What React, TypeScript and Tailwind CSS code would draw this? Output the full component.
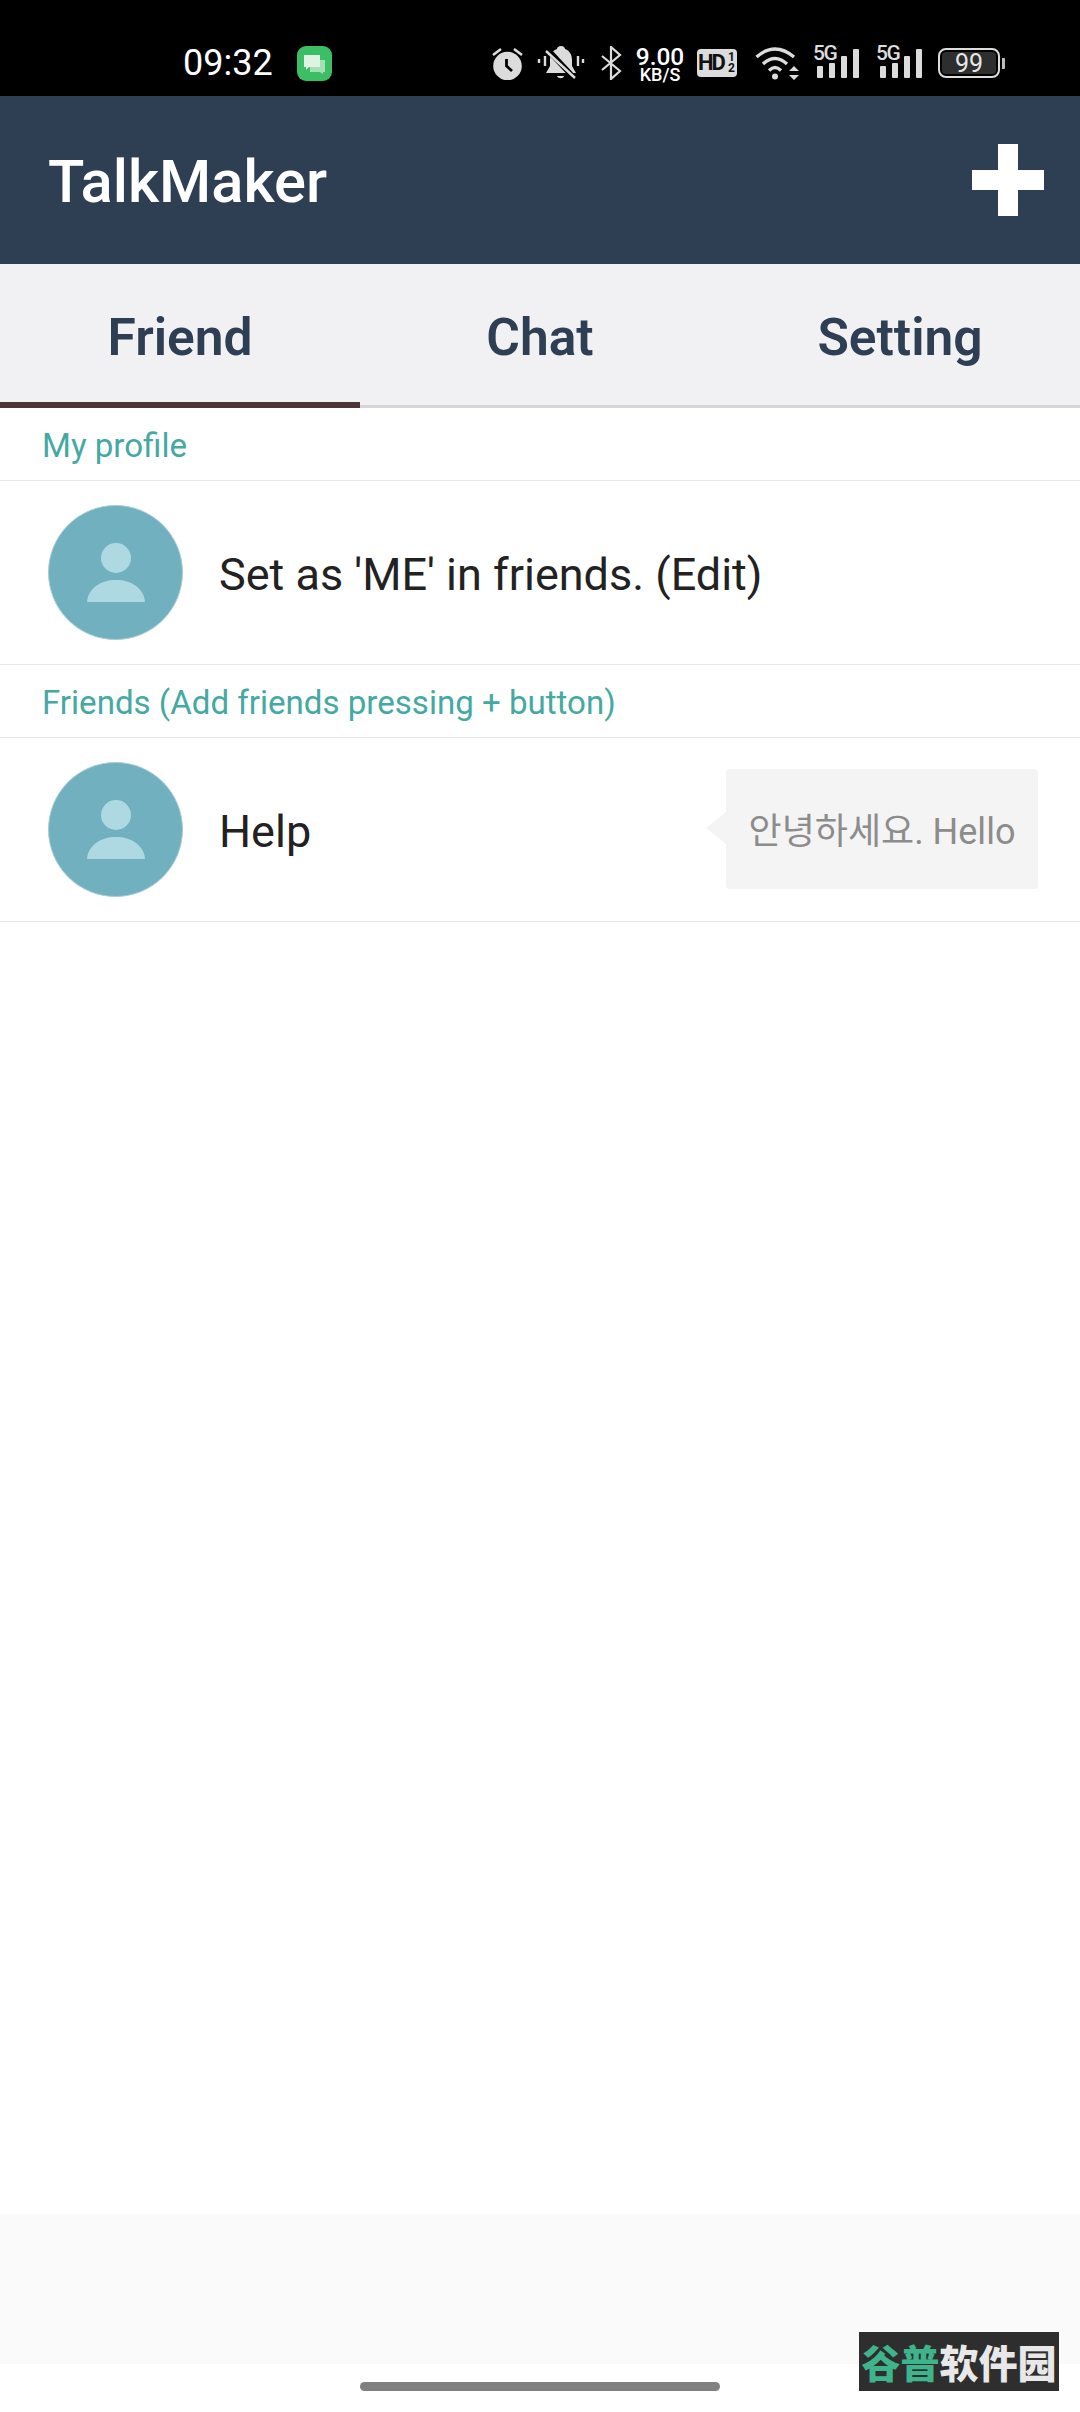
const SANS = "font-['Roboto','Noto_Sans_CJK_KR',sans-serif]";

const Avatar = () => (
  <div className="w-[135px] h-[135px] rounded-full bg-[#71b0bf] border border-[#a9cdd5] shrink-0 flex items-center justify-center overflow-hidden">
    <svg width="58" height="59" viewBox="0 0 58 59">
      <circle cx="29" cy="15" r="15" fill="#aed9e2" />
      <path d="M0 59 C1 45 14 37 29 37 C44 37 57 45 58 59 Z" fill="#aed9e2" />
    </svg>
  </div>
);

const SectionLabel = ({ text }: { text: string }) => (
  <div className="h-[73px] pl-[42px] pt-[3px] flex items-center border-b border-[#e6e6e6] text-[33.1px] text-[#45a9a3] shrink-0">
    {text}
  </div>
);

const Signal = () => (
  <div className="w-[46px] h-[32px] mb-[2px] flex items-end gap-[6px]">
    <div className="w-[22px] flex flex-col">
      <span className="-mt-[1px] h-[17px] text-[21px] leading-[17px] font-medium text-[#dcdcdc] font-['Roboto',sans-serif] tracking-[-1.5px] whitespace-nowrap">5G</span>
      <div className="h-[16px] pl-[4px] flex items-end gap-[6px]">
        <div className="w-[6px] h-[12px] rounded-[1px] bg-[#dcdcdc]" />
        <div className="w-[6px] h-[15px] rounded-[1px] bg-[#dcdcdc]" />
      </div>
    </div>
    <div className="w-[6px] h-[22px] rounded-[1px] bg-[#dcdcdc]" />
    <div className="w-[6px] h-[29px] rounded-[1px] bg-[#dcdcdc]" />
  </div>
);

const StatusIcons = () => (
  <div className="flex items-center">
    {/* alarm */}
    <svg width="31" height="33" viewBox="0 0 31 33" className="mr-[14px]">
      <circle cx="15.5" cy="19" r="14.3" fill="#dcdcdc" />
      <path d="M14.5 12 V19 L20 24" stroke="#000" strokeWidth="2.8" fill="none" />
      <path d="M1 8 L9 2 M30 8 L22 2" stroke="#dcdcdc" strokeWidth="2.6" />
    </svg>
    {/* muted bell */}
    <svg width="48" height="34" viewBox="0 0 48 34" className="mr-[16px]">
      <path d="M24 0 C21 0 20 2 20 3 C15 5 13 9 13 14 L13 20 L9 27 L39 27 L35 20 L35 14 C35 9 33 5 28 3 C28 2 27 0 24 0 Z" fill="#dcdcdc" />
      <path d="M10 3 L38 33" stroke="#000" strokeWidth="5.5" />
      <path d="M9 5 L38 32" stroke="#dcdcdc" strokeWidth="2.4" />
      <path d="M2 13 V17 M8 10 V20 M41 10 V20 M46 13 V17" stroke="#dcdcdc" strokeWidth="2.4" />
      <path d="M20 30 H27 C26.5 33 21 33 20 30 Z" fill="#dcdcdc" />
    </svg>
    {/* bluetooth */}
    <svg width="21" height="34" viewBox="0 0 21 34" className="mr-[14px]">
      <path d="M1 10 L19 25 L10 33 V1 L19 9 L1 24" stroke="#dcdcdc" strokeWidth="2.2" fill="none" />
    </svg>
    <div className="w-[48px] pt-[1px] mr-[13px] flex flex-col items-center text-white font-['Roboto',sans-serif] font-medium">
      <span className="text-[24.5px] leading-[21px]">9.00</span>
      <span className="text-[18px] leading-[15px]">KB/S</span>
    </div>
    {/* HD badge */}
    <div className="w-[40px] h-[28px] mr-[18px] rounded-[4px] bg-[#dcdcdc] flex items-center justify-center text-[#111111] font-bold font-['Roboto',sans-serif] text-[22px] leading-none tracking-[-2px]">
      HD
      <span className="ml-[3px] w-[9px] text-[12px] leading-[11px] text-center tracking-normal">
        1<br />2
      </span>
    </div>
    {/* wifi */}
    <svg width="44" height="33" viewBox="0 0 44 33" className="mr-[14px]">
      <path d="M1.5 10 Q20 -6 39 10" stroke="#dcdcdc" strokeWidth="3.4" fill="none" />
      <path d="M8 17 Q20 6 32 17" stroke="#dcdcdc" strokeWidth="3.4" fill="none" />
      <path d="M14 23.5 Q20 17.5 26 23.5" stroke="#dcdcdc" strokeWidth="3.2" fill="none" />
      <circle cx="20" cy="29.5" r="3" fill="#dcdcdc" />
      <path d="M34 24 L39 19 L44 24 Z M34 28 L44 28 L39 33 Z" fill="#dcdcdc" />
    </svg>
    <Signal />
    <div className="w-[17px]" />
    <Signal />
    <div className="w-[16px]" />
    {/* battery */}
    <div className="w-[62px] h-[30px] rounded-[8px] border-2 border-[#dcdcdc] p-[2px]">
      <div className="w-full h-full rounded-[4px] bg-[#2e2e2e] flex items-center justify-center text-[#e6e6e6] text-[25px] leading-none font-['Roboto',sans-serif]">
        99
      </div>
    </div>
    <div className="w-[3px] h-[11px] ml-[2px] rounded-r-[1px] bg-[#bdbdbd]" />
  </div>
);

const TAB = "w-[360px] pt-[6px] flex items-center justify-center text-[51.5px] font-semibold text-[#2e3f53]";

export default function App() {
  return (
    <div className={`relative w-[1080px] h-[2412px] bg-white flex flex-col overflow-hidden ${SANS}`}>
      <div className="h-[96px] bg-black flex items-center pl-[183px] pr-[75px] pt-[33px] pb-[3px] shrink-0">
        <span className="text-white text-[36px] leading-none w-[114px]">09:32</span>
        <div className="w-[35px] h-[35px] rounded-[9px] bg-[#3cbf64]">
          <svg width="35" height="35" viewBox="0 0 35 35">
            <path d="M13 14 H28 V26 H26 V28 L23 26 H13 Z" fill="#a5e0b5" />
            <path d="M7 9 H23 V21 H12 L9 24 V21 H7 Z" fill="#def3e3" />
          </svg>
        </div>
        <div className="flex-1" />
        <StatusIcons />
      </div>

      <div className="h-[168px] bg-[#2e3f53] flex items-center justify-between pl-[48px] pr-[36px] shrink-0">
        <span className="pt-[6px] text-white text-[59.7px] font-medium">TalkMaker</span>
        <div className="relative w-[72px] h-[72px]">
          <div className="absolute left-[26px] top-0 w-[20px] h-[72px] bg-white" />
          <div className="absolute left-0 top-[26px] w-[72px] h-[20px] bg-white" />
        </div>
      </div>

      <div className="h-[144px] bg-[#f1f1f4] flex border-b-[3px] border-[#d5d5d5] shrink-0">
        <div className={`relative ${TAB}`}>
          Friend
          <div className="absolute left-0 right-0 -bottom-[3px] h-[6px] bg-[#4a3538]" />
        </div>
        <div className={TAB}>Chat</div>
        <div className={TAB}>Setting</div>
      </div>

      <SectionLabel text="My profile" />
      <div className="h-[184px] pl-[48px] flex items-center border-b border-[#e6e6e6] shrink-0">
        <Avatar />
        <span className="ml-[36px] pt-[4px] text-[45px] text-[#222222]">Set as 'ME' in friends. (Edit)</span>
      </div>

      <SectionLabel text="Friends (Add friends pressing + button)" />
      <div className="h-[184px] pl-[48px] pr-[42px] flex items-center border-b border-[#e6e6e6] shrink-0">
        <Avatar />
        <span className="ml-[36px] pt-[4px] text-[45px] text-[#222222]">Help</span>
        <div className="flex-1" />
        <div className="relative w-[312px] h-[120px] mb-[1px] pt-[5px] rounded-[4px] bg-[#f4f4f4] flex items-center justify-center text-[36px] text-[#8c8c8c] whitespace-nowrap">
          <div className="absolute -left-[20px] top-[43px] w-0 h-0 border-y-[16px] border-y-transparent border-r-[20px] border-r-[#f4f4f4]" />
          안녕하세요. Hello
        </div>
      </div>

      <div className="flex-1" />

      <div className="h-[150px] bg-[#fafafa] shrink-0" />
      <div className="h-[48px] shrink-0 relative">
        <div className="absolute left-[360px] top-[18px] w-[360px] h-[9px] rounded-full bg-[#808080]" />
      </div>

      <div className="absolute left-[859px] top-[2332px] w-[200px] h-[59px] bg-[#2e2e2e] flex items-center justify-center whitespace-nowrap text-[39px] leading-none font-black font-['Noto_Sans_CJK_SC',sans-serif]">
        <span className="text-[#3fb48c]">谷普</span>
        <span className="text-[#e8e8e8]">软件园</span>
      </div>
    </div>
  );
}
